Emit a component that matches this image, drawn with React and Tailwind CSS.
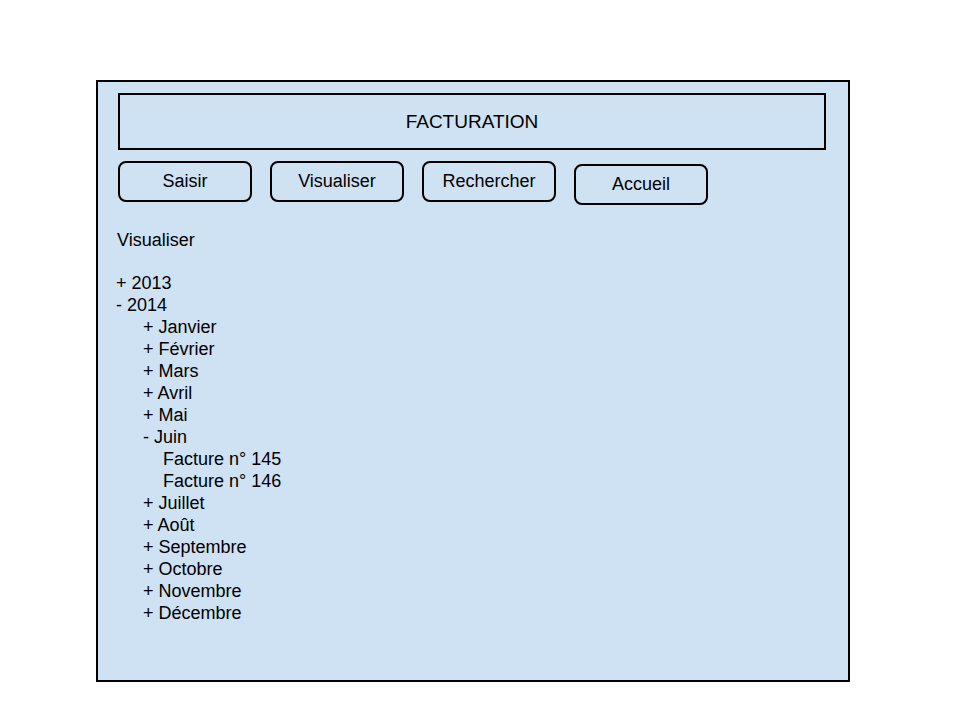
const MONTHS_BEFORE = ['Janvier', 'Février', 'Mars', 'Avril', 'Mai']
const MONTHS_AFTER = ['Juillet', 'Août', 'Septembre', 'Octobre', 'Novembre', 'Décembre']

function Button({ label, className = '' }) {
  return (
    <div
      className={`w-[134px] h-[41px] flex items-center justify-center border-2 border-black rounded-[8px] ${className}`}
    >
      {label}
    </div>
  )
}

export default function App() {
  return (
    <div className="w-[960px] h-[720px] bg-white pt-[80px] pl-[96px] font-['Liberation_Sans',Arial,sans-serif] text-[18px] text-black">
      <div className="w-[754px] h-[602px] bg-[#cfe2f3] border-2 border-black flex flex-col pt-[11px]">
        {/* Header */}
        <div className="ml-[20px] w-[708px] h-[57px] border-2 border-black flex items-center justify-center text-[19px] pt-px">
          FACTURATION
        </div>

        {/* Nav buttons */}
        <div className="ml-[20px] mt-[11px] flex items-start gap-[18px]">
          <Button label="Saisir" />
          <Button label="Visualiser" />
          <Button label="Rechercher" />
          <Button label="Accueil" className="mt-[3px]" />
        </div>

        {/* Tree */}
        <div className="mt-[24px] leading-[22px]">
          <div className="pl-[19px]">Visualiser</div>
          <div className="h-[21px]" />
          <div className="pl-[18px]">+ 2013</div>
          <div className="pl-[18px]">- 2014</div>
          {MONTHS_BEFORE.map((m) => (
            <div key={m} className="pl-[45px]">+ {m}</div>
          ))}
          <div className="pl-[45px]">- Juin</div>
          <div className="pl-[65px]">Facture n° 145</div>
          <div className="pl-[65px]">Facture n° 146</div>
          {MONTHS_AFTER.map((m) => (
            <div key={m} className="pl-[45px]">+ {m}</div>
          ))}
        </div>
      </div>
    </div>
  )
}
